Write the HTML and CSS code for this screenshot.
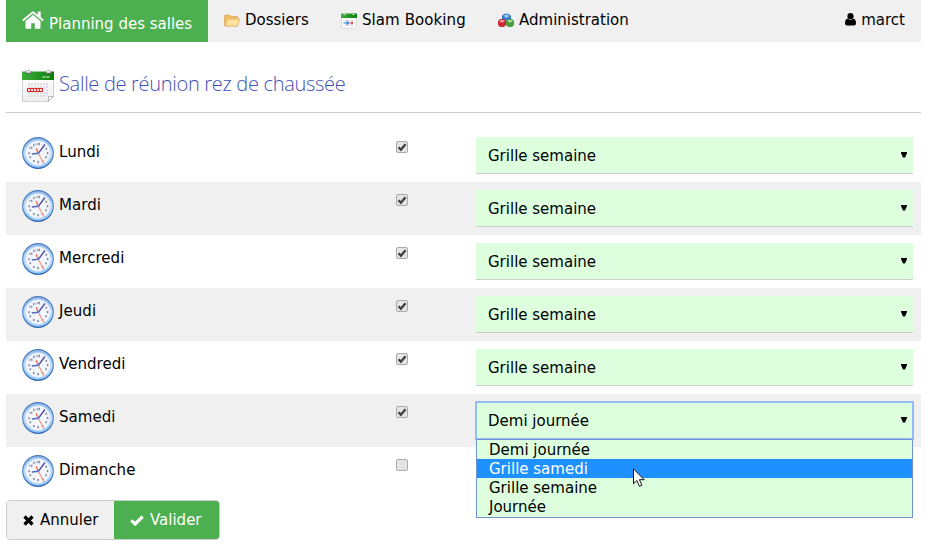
FILE: index.html
```html
<!DOCTYPE html>
<html lang="fr">
<head>
<meta charset="utf-8">
<title>Planning des salles</title>
<link rel="stylesheet" href="styles.css">
</head>
<body>
<svg class="defs" width="0" height="0" aria-hidden="true">
  <defs>
    <linearGradient id="rim" x1="0" y1="0" x2="0" y2="1"><stop offset="0" stop-color="#4779bd"/><stop offset=".5" stop-color="#5c90d2"/><stop offset="1" stop-color="#2f67b5"/></linearGradient>
    <linearGradient id="face" x1="0" y1="0" x2="0" y2="1"><stop offset="0" stop-color="#8fb9ea"/><stop offset=".5" stop-color="#c3dcf7"/><stop offset="1" stop-color="#8fc5fa"/></linearGradient>
    <linearGradient id="green" x1="0" y1="0" x2="1" y2="0"><stop offset="0" stop-color="#3fae3b"/><stop offset="1" stop-color="#087f08"/></linearGradient>
    <linearGradient id="paper" x1="0" y1="0" x2="0" y2="1"><stop offset="0" stop-color="#fff"/><stop offset="1" stop-color="#eee"/></linearGradient>
  </defs>
  <symbol id="clock" viewBox="0 0 32 32">
    <circle cx="16" cy="16" r="15.300" fill="url(#face)" stroke="url(#rim)" stroke-width="1.300"/>
    <circle cx="16" cy="16" r="12.300" fill="#f3f7fd" stroke="#dcebfb" stroke-width=".8"/>
    <g fill="#858b96">
      <path d="M14.800 5.700h.9v2.600h-.9zM16.500 5.700h1.500v2.600h-1.500zM11 6.800h.8v2.400H11zM12.500 6.600h.8V9h-.8zM7.300 9.700h.8v2h-.8zM8.700 9.700h1.700v2H8.700zM6.300 15.200h1.600v2.100H6.300zM7.500 19.300h1.600v2H7.500zM11 23h1.600v2H11zM15.300 24h1.600v2.200h-1.600zM19.800 23h1.600v2h-1.600zM23.300 19.200h1.600v2.100h-1.600zM24.800 15h1.600v2.200h-1.600zM23.500 10.700h1.600v2h-1.600z"/>
    </g>
    <path d="M14.200 11.300L16.200 16" fill="none" stroke="#f5764f" stroke-width="1.500"/>
    <path d="M16.200 16L22 27" fill="none" stroke="#f79675" stroke-width="1.200"/>
    <path d="M9.800 17l6.700-.8" fill="none" stroke="#5068bd" stroke-width="1.500"/>
    <path d="M16.500 16.200L22.900 7.500" fill="none" stroke="#5148a4" stroke-width="1.400"/>
    <circle cx="16.100" cy="16.200" r="1" fill="#607bd3"/>
  </symbol>
  <symbol id="tick" viewBox="0 0 12 12"><path d="M2.600 6.200L4.900 8.800 9.500 3.200" fill="none" stroke="#404040" stroke-width="2.300"/></symbol>
  <symbol id="arrow" viewBox="0 0 6 6"><path d="M0 0h6v1L4 5.500H2L0 1z" fill="#000"/></symbol>
</svg>

<main class="page">
  <nav class="nav">
    <a class="nav-item home">
      <svg class="home-icon" viewBox="0 0 22 18"><path d="M11 3.800L3.500 10v6.800q0 .9.900.9h4.800v-5.500h3.600v5.500h4.800q.9 0 .9-.9V10z" fill="#fff"/><path d="M.8 9.500L11 1.200l10.200 8.300" fill="none" stroke="#fff" stroke-width="1.900"/><path d="M11 3.200L2.900 9.900M11 3.200l8.100 6.700" fill="none" stroke="#4caf50" stroke-width=".7"/><path d="M15.700.5h3v7l-3-2.400z" fill="#fff"/></svg>
      <span>Planning des salles</span>
    </a>
    <a class="nav-item folder">
      <svg class="icon16" viewBox="0 0 16 16"><path d="M.5 12.500V3q0-1 1-1h4L7 3.500h6.500v2H15L13.500 13h-12z" fill="#edbd62" stroke="#d9aa62" stroke-width=".8"/><path d="M3.500 6h12l-2 7h-12z" fill="#ffe09b" stroke="#e6b668" stroke-width=".8"/></svg>
      <span>Dossiers</span>
    </a>
    <a class="nav-item booking">
      <svg class="icon16" viewBox="0 0 16 16"><path d="M.5 2h15v11.500L13.500 15.500H.5z" fill="#fafafa" stroke="#d4d4d4" stroke-width=".8"/><path d="M0 .500h16V5H0z" fill="url(#green)"/><path d="M2.500 1.500h2m7 0h2" stroke="#d9ead9"/><path d="M3 7.500h10M3 12.500h10" stroke="#ddd" stroke-dasharray="1 1"/><path d="M2.500 10h4" stroke="#5c9ee0" stroke-width="1.400"/><path d="M5.500 7.300L9 10l-3.500 2.700z" fill="#4b91d9"/><path d="M9.500 8.700h2.500v2.600H9.500z" fill="#f05454"/></svg>
      <span class="t-booking">Slam Booking</span>
    </a>
    <a class="nav-item admin">
      <svg class="icon16" viewBox="0 0 16 16"><path d="M4 2.800L6.500.8h4L13 2.800V7l-2 2H6L4 7z" fill="#367bce"/><path d="M5.500 3l1.500-1.200h3L11.500 3l-3 2z" fill="#9fc9f1"/><path d="M0 8l2-2h4l2 2v4l-2 2H2l-2-2z" fill="#cd2938"/><path d="M1.200 8l1.300-1.100h3L6.800 8 4 9.700z" fill="#f2a1a4"/><path d="M8 8l2-2h4l2 2v4l-2 2h-4l-2-2z" fill="#4c9d3e"/><path d="M9.200 8l1.300-1.100h3L14.800 8 12 9.700z" fill="#b7dda3"/></svg>
      <span>Administration</span>
    </a>
    <a class="nav-item user">
      <svg class="user-icon" viewBox="0 0 11 13"><circle cx="5.500" cy="3.200" r="3.100"/><path d="M2.700 5.600q2.800 2.600 5.600 0Q11 6.300 11 10.500q0 2-2 2H2q-2 0-2-2Q0 6.300 2.700 5.600z"/></svg>
      <span>marct</span>
    </a>
  </nav>

  <header class="title">
    <svg class="icon32" viewBox="0 0 32 32"><path d="M.5 5h31v21.500L26.500 31.500H.5z" fill="url(#paper)" stroke="#cfcfcf"/><path d="M0 1.500h32V10H0z" fill="url(#green)"/><path d="M5 2.200h3M25 2.200h3" stroke="#666" stroke-width="3.500" stroke-linecap="round"/><path d="M5 1.700h3M25 1.700h3" stroke="#e5e5e5" stroke-width="2" stroke-linecap="round"/><path d="M20.500 7h3m1 0h3" stroke="#a6e2a0" stroke-width="1.500"/><path d="M6 14h17M6 17h17M6 23h17M6 26h17" stroke="#dedede" stroke-width="2" stroke-dasharray="2 1"/><path d="M25 13v12" stroke="#e3cdf5" stroke-width="2" stroke-dasharray="2 1"/><path d="M5 18h16v4H5z" fill="#dc2c2c"/><path d="M6 20h14" stroke="#fbe3e3" stroke-width="2" stroke-dasharray="2 1"/><path d="M26.500 31.500v-5h5z" fill="#fff" stroke="#aaa" stroke-width=".8"/></svg>
    <h1>Salle de réunion rez de chaussée</h1>
  </header>

  <section class="days">
    <div class="row"><div class="day"><svg class="icon32"><use href="#clock"/></svg><span>Lundi</span></div><span class="box"><svg><use href="#tick"/></svg></span><div class="select"><span>Grille semaine</span><svg class="arrow"><use href="#arrow"/></svg></div></div>
    <div class="row"><div class="day"><svg class="icon32"><use href="#clock"/></svg><span>Mardi</span></div><span class="box"><svg><use href="#tick"/></svg></span><div class="select"><span>Grille semaine</span><svg class="arrow"><use href="#arrow"/></svg></div></div>
    <div class="row"><div class="day"><svg class="icon32"><use href="#clock"/></svg><span>Mercredi</span></div><span class="box"><svg><use href="#tick"/></svg></span><div class="select"><span>Grille semaine</span><svg class="arrow"><use href="#arrow"/></svg></div></div>
    <div class="row"><div class="day"><svg class="icon32"><use href="#clock"/></svg><span>Jeudi</span></div><span class="box"><svg><use href="#tick"/></svg></span><div class="select"><span>Grille semaine</span><svg class="arrow"><use href="#arrow"/></svg></div></div>
    <div class="row"><div class="day"><svg class="icon32"><use href="#clock"/></svg><span>Vendredi</span></div><span class="box"><svg><use href="#tick"/></svg></span><div class="select"><span>Grille semaine</span><svg class="arrow"><use href="#arrow"/></svg></div></div>
    <div class="row"><div class="day"><svg class="icon32"><use href="#clock"/></svg><span>Samedi</span></div><span class="box"><svg><use href="#tick"/></svg></span>
      <div class="select open"><span>Demi journée</span><svg class="arrow"><use href="#arrow"/></svg>
        <ul class="menu"><li>Demi journée</li><li class="active">Grille samedi</li><li>Grille semaine</li><li>Journée</li></ul>
        <svg class="cursor" viewBox="0 0 12 19"><path d="M.5.800v15l3.400-3.200 2.500 5.700 2.500-1.100-2.500-5.500h4.800z" fill="#fff" stroke="#111" stroke-width="1"/></svg>
      </div></div>
    <div class="row"><div class="day"><svg class="icon32"><use href="#clock"/></svg><span>Dimanche</span></div><span class="box"></span></div>
  </section>

  <footer class="actions">
    <button class="cancel" type="button"><svg class="cross" viewBox="0 0 11 11"><path d="M1.500 1.500l8 8m0-8l-8 8" stroke="#000" stroke-width="3.200"/></svg><span>Annuler</span></button>
    <button class="ok" type="button"><svg class="okmark" viewBox="0 0 14 11"><path d="M1.300 5.300L5.200 9 12.700 1.500" fill="none" stroke="#fff" stroke-width="3.200"/></svg><span>Valider</span></button>
  </footer>
</main>
</body>
</html>
```
FILE: styles.css
```css
* { box-sizing: border-box; }
body { margin: 0; background: #fff; color: #000; font: 15px/22px "DejaVu Sans", Verdana, sans-serif; overflow: hidden; }
svg { display: block; flex: none; }
.defs { position: absolute; }
.page { width: 915px; margin-left: 6px; }
span { white-space: nowrap; }

.nav { display: flex; height: 42px; background: #f0f0f0; }
.nav-item { display: flex; padding: 9px 16px 0; }
.home { width: 202px; background: #4caf50; color: #fff; gap: 5px; padding-top: 11px; }
.home span { padding-top: 2px; }
.home-icon { width: 22px; height: 18px; }
.icon16 { width: 16px; height: 16px; margin-top: 4px; }
.folder { width: 117px; gap: 5px; }
.booking { width: 157px; gap: 5px; }
.t-booking { letter-spacing: .08px; }
.admin { width: 170px; gap: 5px; }
.user { margin-left: auto; gap: 5px; }
.user-icon { width: 11px; height: 13px; margin-top: 4px; }

.title { display: flex; height: 71px; padding: 28px 16px 0; border-bottom: 1px solid #ccc; gap: 5px; }
.icon32 { width: 32px; height: 32px; }
h1 { margin: 0; font: 350 20px/28px "Open Sans", "Noto Sans", sans-serif; letter-spacing: -.3px; color: #3f51b5; white-space: nowrap; }

.days { padding-top: 16px; }
.row { display: grid; grid-template-columns: 374px 80px 437px; height: 53px; padding: 8px 0 0 16px; align-items: start; }
.row:nth-child(even) { background: #f0f0f0; }
.day { display: flex; gap: 5px; }
.day span { padding-top: 4px; letter-spacing: .05px; }
.box { width: 12px; height: 12px; margin-top: 4px; border: 1px solid #aaa; border-radius: 2px; background: #e4e4e4; }
.box svg { width: 12px; height: 12px; margin: -1px; }
.select { position: relative; display: flex; justify-content: space-between; height: 37px; padding: 8px 6px 0 12px; background: #dfd; border-bottom: 1px solid #ccc; }
.arrow { width: 6px; height: 6px; margin-top: 7px; }
.open { height: 37px; border: 1px solid #91bdf2; outline: 1px solid #91bdf2; outline-offset: 0; padding: 7px 5px 0 11px; }
.menu { position: absolute; z-index: 1; top: 36px; left: -1px; width: 437px; height: 79px; margin: 0; padding: 0; list-style: none; background: #dfd; border: 1px solid #6f94cf; }
.menu li { height: 19px; line-height: 20px; padding-left: 12px; }
.menu .active { background: #1e90ff; color: #fff; }
.cursor { position: absolute; z-index: 2; left: 156px; top: 65px; width: 12px; height: 19px; }

.actions { display: flex; width: 214px; height: 40px; border: 1px solid #ccc; border-radius: 4px; overflow: hidden; }
button { display: flex; align-items: center; border: 0; padding: 0 16px; font: inherit; }
.cancel { width: 107px; gap: 6px; background: #f0f0f0; color: #000; }
.ok { width: 105px; gap: 6px; background: #4caf50; color: #fff; }
.cross { width: 11px; height: 11px; }
.okmark { width: 14px; height: 11px; }
```
